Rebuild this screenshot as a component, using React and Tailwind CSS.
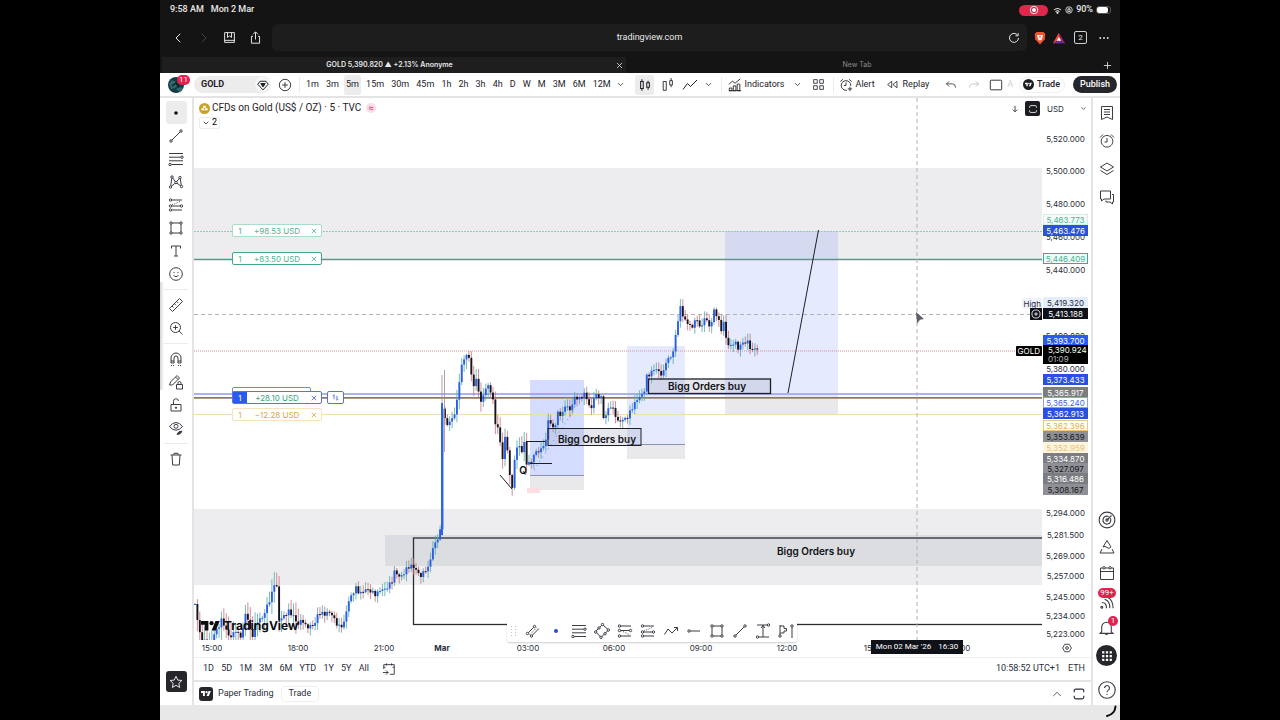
import { useState } from "react";
import { ChevronDown, ChevronUp, ChevronLeft, ChevronRight, X, Plus } from "lucide-react";

const intervals = ["1m", "3m", "5m", "15m", "30m", "45m", "1h", "2h", "3h", "4h", "D", "W", "M", "3M", "6M", "12M"];
const ranges = ["1D", "5D", "1M", "3M", "6M", "YTD", "1Y", "5Y", "All"];

// [x, y] of the close along the chart
const path = [
  [195, 604], [197, 616], [199, 632], [203, 640], [210, 646], [214, 634], [218, 628], [222, 619], [226, 630],
  [230, 638], [236, 630], [240, 638], [244, 626], [246, 609], [248, 620], [252, 638], [256, 622], [262, 618],
  [265, 612], [268, 603], [271, 598], [274, 583], [277, 588], [279, 620], [284, 616], [289, 611], [294, 617],
  [298, 625], [302, 619], [306, 627], [312, 626], [316, 622], [318, 613], [325, 614], [330, 612], [335, 620],
  [338, 627], [343, 625], [345, 621], [347, 606], [350, 598], [356, 588], [360, 594], [366, 589], [372, 592],
  [376, 595], [380, 590], [386, 589], [392, 581], [395, 570], [399, 577], [403, 575], [407, 568], [410, 566],
  [414, 567], [418, 573], [421, 576], [426, 569], [429, 568], [431, 555], [434, 545], [438, 538], [440, 538],
  [442, 403], [444, 418], [447, 424], [450, 422], [453, 417], [456, 410], [458, 391], [460, 375], [463, 360],
  [466, 355], [469, 358], [472, 378], [474, 389], [476, 376], [478, 390], [480, 402], [483, 397], [486, 388],
  [489, 383], [491, 397], [494, 398], [495, 426], [499, 426], [501, 455], [503, 460], [505, 436], [507, 449],
  [509, 463], [511, 489], [513, 490], [514, 462], [516, 450], [519, 445], [522, 452], [524, 441], [526, 462],
  [528, 465], [532, 460], [536, 451], [540, 452], [543, 445], [547, 440], [548, 418], [552, 428], [556, 424],
  [558, 412], [562, 416], [565, 405], [570, 410], [575, 397], [580, 399], [585, 393], [588, 403], [592, 410],
  [594, 396], [598, 396], [602, 398], [603, 418], [606, 415], [610, 405], [614, 411], [618, 422], [622, 420],
  [627, 418], [632, 408], [638, 398], [644, 393], [646, 377], [650, 374], [655, 368], [660, 373], [663, 376],
  [665, 362], [670, 358], [674, 350], [676, 332], [678, 320], [680, 307], [682, 311], [684, 320], [690, 325],
  [692, 331], [694, 318], [698, 323], [702, 327], [705, 315], [709, 327], [711, 326], [713, 310], [716, 313],
  [720, 325], [722, 333], [724, 320], [726, 338], [730, 348], [735, 340], [737, 350], [742, 343], [748, 342],
  [752, 352], [755, 347], [758, 351],
];

function priceAt(x) {
  const i = path.findIndex((p) => p[0] >= x);
  if (i <= 0) return path[0][1];
  const [x0, y0] = path[i - 1];
  const [x1, y1] = path[i];
  return y0 + ((y1 - y0) * (x - x0)) / (x1 - x0);
}

function wickSize(x) {
  if (x < 300) return 12;
  if (x > 455 && x < 530) return 9;
  return 6;
}

function buildCandles() {
  const list = [];
  let open = 604;
  for (let i = 0; i < 235; i++) {
    const x = 195 + i * 2.403;
    if (x > 440.5 && x < 441.8) continue;
    const close = priceAt(x) + Math.sin(i * 2.7) * 1.8;
    const up = Math.abs(Math.sin(i * 12.9)) * wickSize(x) + 1;
    const down = Math.abs(Math.sin(i * 7.3)) * wickSize(x) + 1;
    list.push({ x, open, close, high: Math.min(open, close) - up, low: Math.max(open, close) + down });
    open = close;
  }
  return list;
}

const candles = buildCandles();

const priceLabels = [
  { y: 139, text: "5,520.000" },
  { y: 171, text: "5,500.000" },
  { y: 204, text: "5,480.000" },
  { y: 237, text: "5,460.000" },
  { y: 220, text: "5,463.773", cls: "bg-[#f4fbf8] text-[#4fb391] border border-[#d3efe5]" },
  { y: 231, text: "5,463.476", cls: "bg-[#2a50e0] text-white" },
  { y: 259, text: "5,446.409", cls: "bg-[#f1faf7] text-[#4fb391] border border-[#41a98a]" },
  { y: 270, text: "5,440.000" },
  { y: 303, text: "5,419.320", cls: "bg-[#e3edfc] text-[#2a2e39]" },
  { y: 314, text: "5,413.188", cls: "bg-[#101219] text-white" },
  { y: 336, text: "5,400.000" },
  { y: 341, text: "5,393.700", cls: "bg-[#2a5af0] text-white" },
  { y: 369, text: "5,380.000" },
  { y: 380, text: "5,373.433", cls: "bg-[#2a50e0] text-white" },
  { y: 393, text: "5,365.917", cls: "bg-[#7b7d82] text-white" },
  { y: 403, text: "5,365.240", cls: "bg-white text-[#4762d8] border border-[#8ea0ea]" },
  { y: 414, text: "5,362.913", cls: "bg-[#2a50e0] text-white" },
  { y: 426, text: "5,362.396", cls: "bg-white text-[#e2b04c] border border-[#edc77f]" },
  { y: 437, text: "5,353.639", cls: "bg-[#8f9095] text-[#15171c]" },
  { y: 448, text: "5,352.959", cls: "bg-[#fff4dc] text-[#e8c27a]" },
  { y: 459, text: "5,334.870", cls: "bg-[#7b7d82] text-white" },
  { y: 469, text: "5,327.097", cls: "bg-[#8f9095] text-[#15171c]" },
  { y: 479, text: "5,316.486", cls: "bg-[#7b7d82] text-white" },
  { y: 490, text: "5,308.167", cls: "bg-[#8f9095] text-[#15171c]" },
  { y: 513, text: "5,294.000" },
  { y: 535, text: "5,281.500" },
  { y: 556, text: "5,269.000" },
  { y: 576, text: "5,257.000" },
  { y: 597, text: "5,245.000" },
  { y: 616, text: "5,234.000" },
  { y: 634, text: "5,223.000" },
];

const timeLabels = [
  [212, "15:00"], [298, "18:00"], [384, "21:00"], [442, "Mar"], [528, "03:00"],
  [614, "06:00"], [701, "09:00"], [787, "12:00"], [874, "15:00"], [960, "18:00"],
];

function Icon({ children, className = "size-4", width = 1 }) {
  return (
    <svg viewBox="0 0 16 16" fill="none" stroke="currentColor" strokeWidth={width} className={className} aria-hidden="true">
      {children}
    </svg>
  );
}

const Dot = ({ x, y, r = 1.2 }) => <circle cx={x} cy={y} r={r} fill="#fff" />;

const TrendLine = () => (
  <Icon>
    <path d="M3 13L13 3" />
    <Dot x={3} y={13} />
    <Dot x={13} y={3} />
  </Icon>
);

const Rectangle = () => (
  <Icon>
    <path d="M3 3h10v10H3z" />
    <Dot x={3} y={3} />
    <Dot x={13} y={3} />
    <Dot x={3} y={13} />
    <Dot x={13} y={13} />
  </Icon>
);

const FibLines = () => (
  <Icon>
    <path d="M1 2.500h14M1 6.200h14M1 9.800h14M1 13.500h14" />
    <Dot x={14} y={6.2} />
    <Dot x={2} y={13.5} />
  </Icon>
);

const LongPosition = () => (
  <Icon>
    <path d="M2 3h12M2 7.500h12M2 13h12" />
    <path d="M4 7.500L13 12" strokeDasharray="1 1.500" />
    <Dot x={2.5} y={3} />
    <Dot x={2.5} y={7.5} />
    <Dot x={13.5} y={7.5} />
    <Dot x={2.5} y={13} />
  </Icon>
);

const ShortPosition = () => (
  <Icon>
    <path d="M2 3h12M2 9h12M2 13h12" />
    <path d="M4 8L13 4" strokeDasharray="1 1.500" />
    <Dot x={2.5} y={3} />
    <Dot x={2.5} y={9} />
    <Dot x={13.5} y={9} />
    <Dot x={2.5} y={13} />
  </Icon>
);

const Frame = ({ className }) => (
  <Icon className={className} width={1.3}>
    <path d="M2.500 6V4.500Q2.500 2.500 4.500 2.500H11.500Q13.500 2.500 13.500 4.500V6M2.500 10V11.500Q2.500 13.500 4.500 13.500H11.500Q13.500 13.500 13.500 11.500V10" />
  </Icon>
);

const TvMark = ({ className }) => (
  <svg viewBox="0 0 36 28" fill="currentColor" className={className} aria-hidden="true">
    <path d="M14 22H7V11H0V4h14v18zM28 22h-8l7.500-18h8L28 22z" />
    <circle cx="20" cy="8" r="4" />
  </svg>
);

const drawTools = [
  [
    ["Dot cursor", <Icon><circle cx="8" cy="8" r="1.800" fill="#111" stroke="none" /></Icon>],
    ["Trend line", <TrendLine />],
    ["Fib retracement", <FibLines />],
    ["Patterns", (
      <Icon>
        <path d="M2.500 13L4 3L8 8.500L12 3.500L13.500 12.500L8 8.500z" />
        <Dot x={2.5} y={13} />
        <Dot x={4} y={3} />
        <Dot x={8} y={8.5} />
        <Dot x={12} y={3.5} />
        <Dot x={13.5} y={12.5} />
      </Icon>
    )],
    ["Forecasting", <ShortPosition />],
    ["Shapes", <Rectangle />],
    ["Text", <Icon><path d="M3.500 5.500V3h9v2.500M8 3v10M6 13h4" /></Icon>],
    ["Emoji", (
      <Icon>
        <circle cx="8" cy="8" r="6.300" />
        <path d="M5.500 9.500Q8 12 10.500 9.500M6 6v1M10 6v1" />
      </Icon>
    )],
  ],
  [
    ["Measure", <Icon><path d="M1.500 11.500L11.500 1.500L14.500 4.500L4.500 14.500zM4 9l1.500 1.500M6.300 6.700l1.500 1.500M8.600 4.400l1.500 1.500" /></Icon>],
    ["Zoom in", (
      <Icon>
        <circle cx="7.500" cy="7.500" r="5" />
        <path d="M11 11l3.500 3.500M5.200 7.500h4.600M7.500 5.200v4.600" />
      </Icon>
    )],
  ],
  [
    ["Magnet", <Icon><path d="M3 12V7a5 5 0 0 1 10 0v5h-3V7a2 2 0 0 0-4 0v5zM3 10h3M10 10h3M3.500 14v1M5.500 14v1M10.500 14v1M12.500 14v1" /></Icon>],
    ["Stay in drawing mode", <Icon><path d="M1.500 11L2.500 8L9 1.500L11.500 4L4.500 11zM7.500 3l2.500 2.500M8.500 10.500h6V15h-6zM10 10.500V9a1.500 1.500 0 0 1 3 0V10.500" /></Icon>],
    ["Lock drawings", <Icon><path d="M3 7.500h10v6.500H3zM5.500 7.500V4.500a2.500 2.500 0 0 1 5-.5" /><circle cx="8" cy="10.700" r=".7" fill="currentColor" /></Icon>],
    ["Hide drawings", (
      <Icon>
        <path d="M1.500 6.500Q8-1.500 14.500 6.500Q8 14 1.500 6.500z" />
        <circle cx="8" cy="6.300" r="2" />
        <path d="M9 14.500Q10 11 14 11Q13 14.500 9 14.500z" fill="currentColor" />
      </Icon>
    )],
  ],
  [
    ["Remove objects", <Icon><path d="M2.500 4h11M6 4V2.300h4V4M4 4l.7 10h6.600L12 4" /></Icon>],
  ],
];

const favTools = [
  ["Parallel channel", (
    <Icon>
      <path d="M2.500 10.500L9.500 3.500M6.500 13L14 5.500" />
      <path d="M4.500 12L12 4.500" strokeDasharray="1 1.500" />
      <Dot x={2.5} y={10.5} />
      <Dot x={9.5} y={3.5} />
      <Dot x={6.5} y={13} />
    </Icon>
  )],
  ["Dot", <Icon><circle cx="8" cy="8" r="2" fill="#2b4bdc" stroke="none" /></Icon>],
  ["Fib", <FibLines />],
  ["Rotated rectangle", (
    <Icon>
      <path d="M8.500 1.500L14.500 7L7 14.500L1.500 8.500z" />
      <Dot x={8.5} y={1.5} />
      <Dot x={14.3} y={7} />
      <Dot x={7} y={14.3} />
      <Dot x={1.7} y={9} />
      <Dot x={5} y={5} />
      <Dot x={11} y={10.7} />
    </Icon>
  )],
  ["Long position", <LongPosition />],
  ["Short position", <ShortPosition />],
  ["Path", <Icon><path d="M1.500 11.500L5 6L9 10L14.500 4.500M11 4.500h3.500V8" /></Icon>],
  ["Horizontal ray", <Icon><path d="M2.500 8H14" /><Dot x={3} y={8} /></Icon>],
  ["Rectangle", <Rectangle />],
  ["Line", <TrendLine />],
  ["Price range", <Icon><path d="M2 2h12M2 14h12M8 2v12M6 5l2-2.500L10 5" /><Dot x={13.5} y={2} /><Dot x={2.5} y={14} /></Icon>],
  ["Anchored volume profile", <Icon><path d="M2 2v12M2 3h4v2.500h2.500v2.500H6v2H2M14 3v12" /><Dot x={2} y={13} /><Dot x={14} y={3} /></Icon>],
];

const Divider = () => <span className="h-4 w-px shrink-0 bg-[#ebebeb]" />;

function Browser() {
  return (
    <header className="bg-[#141414] text-[#e8e8e8]">
      <div className="flex h-5 items-center pl-[10px] pr-[9px] text-[9px] font-medium">
        <span>9:58 AM</span>
        <span className="ml-[7px]">Mon 2 Mar</span>
        <span className="ml-auto flex h-[11px] w-[29px] items-center justify-center rounded-full bg-[#e0264b]">
          <Icon className="size-[10px]" width={1.6}>
            <circle cx="8" cy="8" r="6" />
            <circle cx="8" cy="8" r="2.600" fill="#fff" />
          </Icon>
        </span>
        <Icon className="ml-[5px] size-[9px]" width={2}>
          <path d="M2 7Q8 2 14 7M4.500 10Q8 7 11.500 10" />
          <circle cx="8" cy="12" r="1" fill="currentColor" />
        </Icon>
        <Icon className="ml-[3px] size-[8px]" width={1.6}>
          <circle cx="8" cy="8" r="6.500" />
          <path d="M5.500 7.500h5v3.500h-5zM6.500 7.500V5.500a1.500 1.500 0 0 1 3 0v2" />
        </Icon>
        <span className="ml-[3px]">90%</span>
        <span className="ml-[3px] flex h-2 w-[15px] rounded-[3px] border border-[#555] bg-[#141414]">
          <span className="w-[11px] rounded-[2px] bg-white" />
        </span>
      </div>

      {/* address bar */}
      <div className="flex h-[35px] items-center">
        <button aria-label="Back" className="flex w-[26px] justify-end"><ChevronLeft size={16} strokeWidth={1.5} /></button>
        <button aria-label="Forward" className="flex w-[26px] justify-end text-[#444]"><ChevronRight size={16} strokeWidth={1.5} /></button>
        <button aria-label="Bookmarks" className="ml-[11px]">
          <Icon className="size-[13px]" width={1.2}><path d="M2 2h12v12H2zM2 11.500h12M5.500 2v6L8 6l2.500 2V2" /></Icon>
        </button>
        <button aria-label="Share" className="ml-[13px]">
          <Icon className="size-[13px]" width={1.2}><path d="M5 6.500H3V15h10V6.500h-2M8 10.500V1.500M5 4l3-3 3 3" /></Icon>
        </button>
        <div className="ml-[10px] flex h-[27px] flex-1 items-center rounded-md bg-[#1d1d1d] pr-[7px]">
          <input aria-label="Address" className="min-w-0 flex-1 bg-transparent pl-[19px] text-center text-[9px] outline-none" defaultValue="tradingview.com" />
          <button aria-label="Reload">
            <Icon className="size-[12px]" width={1.3}><path d="M13 4.500A6 6 0 1 0 14 8M13.500 1.500V5H10" /></Icon>
          </button>
        </div>
        <button aria-label="Shields" className="ml-[6px]">
          <svg viewBox="0 0 16 16" className="size-[14px]">
            <path d="M4 1h8l2 2.500-.5 6L8 15.500 2.500 9.500 2 3.500z" fill="#f2542d" />
            <path d="M4.500 4.500h7l-1.500 5L8 11 6 9.500z" fill="#fff" />
            <path d="M6.800 6h2.400L8 9z" fill="#f2542d" />
          </svg>
        </button>
        <button aria-label="Rewards" className="ml-[6px]">
          <svg viewBox="0 0 16 16" className="size-[12px]">
            <path d="M8 1L16 15H0z" fill="#9e1f63" />
            <path d="M8 1L0 15l8-5z" fill="#ff4724" />
            <path d="M0 15h16L8 10z" fill="#662d91" />
            <path d="M8 6.500l3 5H5z" fill="#fff" />
          </svg>
        </button>
        <button aria-label="Tabs" className="ml-[9px] flex size-[13px] items-center justify-center rounded-[2px] border border-[#cfcfcf] text-[8px]">2</button>
        <button aria-label="Menu" className="ml-[12px] mr-[11px]">
          <Icon className="size-[10px]">
            <g fill="currentColor" stroke="none"><circle cx="2" cy="8" r="1.500" /><circle cx="8" cy="8" r="1.500" /><circle cx="14" cy="8" r="1.500" /></g>
          </Icon>
        </button>
      </div>

      {/* tabs */}
      <div className="flex h-[18px] items-center pt-0.5 font-['Inter',sans-serif] text-[7px]">
        <div className="ml-0.5 flex h-4 w-[464px] items-center bg-[#1e1e1e] font-semibold">
          <button className="flex-1 pl-0.5 text-center">GOLD 5,390.820 ▲ +2.13% Anonyme</button>
          <button aria-label="Close tab" className="pr-0.5"><X size={9} strokeWidth={2} /></button>
        </div>
        <button className="flex-1 pr-3.5 text-center text-[#8c8c8c]">New Tab</button>
        <button aria-label="New tab" className="pr-[7px]"><Plus size={11} strokeWidth={1.8} /></button>
      </div>
    </header>
  );
}

function Toolbar() {
  const [active, setActive] = useState("5m");
  return (
    <div className="flex h-[25px] shrink-0 items-center border-b-2 border-[#e4e4e5] bg-white text-[9px] text-[#1e2128]">
      <button aria-label="Account" className="relative ml-2 size-4 rounded-full bg-[#173b42]">
        <svg viewBox="0 0 16 16" className="size-4 rounded-full" aria-hidden="true">
          <path d="M1 7l3-4 4 2 2 3-3 3-4 1zM8 12l4-2 3 1-3 4z" fill="#2c6a70" />
          <path d="M4 9l4-3 3 4" stroke="#0c1c22" strokeWidth="1.500" fill="none" />
        </svg>
        <span className="absolute -top-0.5 left-[9px] flex h-[10px] w-[13px] items-center justify-center rounded-full bg-[#e2224e] text-[8px] text-white">11</span>
      </button>
      <button className="ml-[10px] flex h-[17px] w-[77px] shrink-0 items-center justify-between rounded-full bg-[#ececec] pl-[7px] pr-px font-bold">
        GOLD
        <span className="flex size-[15px] items-center justify-center rounded-full bg-[#f7f7f7]">
          <Icon className="size-3" width={1.3}>
            <path d="M4 3h8l3 4-7 7.500L1 7z" />
            <path d="M5 6h6L8 10.500z" fill="currentColor" />
          </Icon>
        </span>
      </button>
      <button aria-label="Compare" className="ml-[7px] mr-[7px]">
        <Icon className="size-[14px]"><circle cx="8" cy="8" r="6.500" /><path d="M8 4.800v6.400M4.800 8h6.400" /></Icon>
      </button>
      <Divider />
      <div className="ml-1 flex w-[321px] shrink-0 items-center justify-between">
        {intervals.map((t) => (
          <button
            key={t}
            onClick={() => setActive(t)}
            className={`h-5 rounded-[3px] px-0.5 ${t === active ? "bg-[#ececec]" : ""}`}
          >
            {t}
          </button>
        ))}
        <button aria-label="More intervals"><ChevronDown size={9} strokeWidth={2} /></button>
      </div>
      <button aria-label="Candles" className="ml-[10px] flex size-5 items-center justify-center rounded-[3px] bg-[#ececec]">
        <Icon className="size-[14px]" width={1.2}><path d="M3 4h3v8H3zM4.500 1.500V4M4.500 12v2.500M10 5.500h3v5h-3zM11.500 3v2.500M11.500 10.500v3" /></Icon>
      </button>
      <button aria-label="Hollow candles" className="ml-0.5 flex w-[23px] justify-center">
        <Icon className="size-[14px]"><path d="M2.500 4h3.500v10H2.500zM10 3h3v5h-3zM11.500 0v3M11.500 8v2.500" /></Icon>
      </button>
      <button aria-label="Line" className="flex w-[23px] justify-center">
        <Icon><path d="M1 12.500L5.500 6.500L8.500 9.500L15 3" /></Icon>
      </button>
      <button aria-label="Chart types" className="mr-1 flex w-4 justify-center"><ChevronDown size={9} strokeWidth={2} /></button>
      <Divider />
      <button className="ml-[6px] flex items-center gap-[3px]">
        <Icon className="size-[14px]"><path d="M1.500 14.500v-3h3v3zM6 14.500V9h3v5.500zM10.500 14.500V7h3v7.500zM1 7.500l4-4 3 2.500 6-5M1 14.500h14" /></Icon>
        Indicators
      </button>
      <button aria-label="Indicator templates" className="mx-2"><ChevronDown size={9} strokeWidth={2} /></button>
      <button aria-label="Layouts" className="ml-0.5 mr-2">
        <Icon className="size-[13px]"><path d="M2 2h4.500v4.500H2zM9.500 2H14v4.500H9.500zM2 9.500h4.500V14H2zM9.500 9.500H14V14H9.500z" strokeLinejoin="round" /></Icon>
      </button>
      <Divider />
      <button className="ml-[5px] flex items-center gap-[3px]">
        <Icon className="size-[14px]"><path d="M9 14A5.500 5.500 0 1 1 13.500 9M8 5v3.500H5.500M1.500 4L4.500 1.500M11.500 1.500L14.500 4M12.500 10v5M10 12.500h5" /></Icon>
        Alert
      </button>
      <button className="ml-[11px] flex items-center gap-1">
        <Icon className="size-[13px]"><path d="M7 4v8L2 8zM13.500 4v8L8.500 8z" /></Icon>
        Replay
      </button>
      <span className="ml-[11px]"><Divider /></span>
      <button aria-label="Undo" className="flex w-[23px] justify-center">
        <Icon className="size-3"><path d="M5.500 3L2 6.500L5.500 10M2 6.500h8q4 0 4 5" /></Icon>
      </button>
      <button aria-label="Redo" className="flex w-[23px] justify-center text-[#b5b5b8]">
        <Icon className="size-3"><path d="M10.500 3L14 6.500L10.500 10M14 6.500H6q-4 0-4 5" /></Icon>
      </button>
      <button aria-label="Layout setup" className="flex w-[23px] justify-center">
        <Icon className="size-[14px]"><rect x="1.500" y="2.500" width="13" height="11" rx="1" /></Icon>
      </button>
      <div className="ml-auto flex shrink-0 items-center pr-[3px]">
        <span className="mr-1.5 text-[#d0d0d2]">A</span>
        <button className="flex h-4 items-center gap-[3px] rounded-full border border-[#f0f0f0] pl-[3px] pr-1 font-medium">
          <span className="flex size-[11px] items-center justify-center rounded-full bg-[#1c1d21] text-white">
            <TvMark className="w-[7px]" />
          </span>
          Trade
        </button>
        <button className="ml-2 h-[17px] rounded-full bg-[#26272b] px-[7px] font-medium text-white">Publish</button>
      </div>
    </div>
  );
}

function LeftTools() {
  return (
    <aside className="relative flex w-8 shrink-0 flex-col items-center bg-white pt-[3px] text-[#3a3d45]">
      {drawTools.map((group, i) => (
        <div key={i} className="flex flex-col items-center">
          {i > 0 && <span className="mb-[3px] mt-1 h-px w-6 bg-[#ebebeb]" />}
          {group.map(([name, icon], j) => (
            <button
              key={name}
              aria-label={name}
              className={`flex h-[23px] w-[21px] items-center justify-center rounded-[3px] ${i === 0 && j === 0 ? "bg-[#ececec]" : ""}`}
            >
              {icon}
            </button>
          ))}
        </div>
      ))}
      <button aria-label="Favorites" className="mb-[13px] mt-auto flex size-[21px] items-center justify-center rounded-[3px] bg-[#26272b] text-white">
        <Icon className="size-[14px]"><path d="M8 1.500l2 4.300 4.700.5-3.500 3.200 1 4.700L8 11.800l-4.200 2.400 1-4.700L1.300 6.300 6 5.800z" /></Icon>
      </button>
      {/* shade of the panel tucked behind the edge */}
      <span className="absolute left-0 top-[184px] h-[108px] w-1 bg-linear-to-r from-[#d4d4d4] to-transparent" />
    </aside>
  );
}

function RightTools() {
  return (
    <aside className="flex w-[27px] shrink-0 flex-col items-center bg-white pt-px text-[#3a3d45]">
      {[
        ["Watchlist", "M2.500 1.500h11v13L8 12l-5.500 2.500zM5 4.500h6M5 7h6M5 9.500h6"],
        ["Alerts", "M8 2.500a5.800 5.800 0 1 0 .01 0zM8 5v4H5.500M1 4.500L4 1.500M12 1.500L15 4.500"],
        ["Object tree", "M8 2l6.500 4L8 10L1.500 6zM1.500 9.500L8 13.500l6.500-4"],
        ["Chats", "M1.500 2h10v8H5L2.500 12v-2h-1zM13 5.500h1.500V13h-1v2L11 13H7v-1.500"],
      ].map(([name, d]) => (
        <button key={name} aria-label={name} className="flex h-7 items-center"><Icon><path d={d} /></Icon></button>
      ))}
      <button aria-label="Screeners" className="mt-auto flex h-[26px] items-center">
        <Icon className="size-[18px]"><circle cx="8" cy="8" r="7" /><path d="M11 6.500A3.500 3.500 0 1 1 9.500 5M8 8l4-4" /><circle cx="8" cy="8" r="1" /></Icon>
      </button>
      <button aria-label="Pine" className="flex h-[27px] items-center">
        <Icon><path d="M8 1.500L4 8Q6 6.500 8 8.500T12 8zM3 10l-2 4h14l-2-4" /></Icon>
      </button>
      <button aria-label="Calendar" className="flex h-[26px] items-center">
        <Icon><path d="M1.500 3h13v11.500h-13zM1.500 6.500h13" /><Dot x={5} y={2.8} /><Dot x={11} y={2.8} /></Icon>
      </button>
      <button aria-label="News" className="relative flex h-[27px] items-end pb-[3px]">
        <Icon className="size-[15px]" width={1.2}><circle cx="3" cy="13" r="1" /><path d="M3 8q5 0 5 6M6 4.500q6 2 5.500 9.500M10 3q5 3 5 11" /></Icon>
        <span className="absolute -left-px top-[2px] flex h-[10px] w-[18px] items-center justify-center rounded-full bg-[#e2224e] text-[8px] text-white">99+</span>
      </button>
      <button aria-label="Notifications" className="relative flex h-7 items-center">
        <Icon className="size-[17px]"><path d="M3.500 12V7.500a4.500 4.500 0 0 1 9 0V12l1.500 1.500H2zM6.500 13.500q1.500 2 3 0" /></Icon>
        <span className="absolute left-[10px] top-[3px] flex size-[10px] items-center justify-center rounded-full bg-[#e2224e] text-[8px] text-white">1</span>
      </button>
      <button aria-label="Apps" className="mt-1 flex size-[21px] items-center justify-center rounded-full bg-[#26272b] text-white">
        <Icon className="size-3" width={3}><path d="M1.500 3h13M1.500 8h13M1.500 13h13" strokeDasharray="3 2" /></Icon>
      </button>
      <button aria-label="Help" className="mb-[6px] mt-[15px]">
        <Icon className="size-[18px]"><circle cx="8" cy="8" r="7.300" /><path d="M5.800 6.200a2.200 2.200 0 1 1 3.400 1.900Q8 8.800 8 10M8 11.500v1" /></Icon>
      </button>
    </aside>
  );
}

function Drawing() {
  return (
    <svg className="absolute inset-0 size-full" fontFamily="Inter, sans-serif">
      <g transform="translate(-194 -98)">
        {/* supply and demand zones */}
        <rect x="194" y="168" width="2000" height="92" fill="#ededef" />
        <rect x="194" y="509" width="2000" height="76" fill="#ededef" />
        <rect x="385" y="535" width="2000" height="31" fill="#dcdde0" />

        {/* positions */}
        <g fill="#2650ff">
          <rect x="725" y="231" width="113" height="162" fillOpacity=".12" />
          <rect x="530" y="380" width="54" height="96" fillOpacity=".2" />
          <rect x="627" y="346" width="58" height="99" fillOpacity=".12" />
        </g>
        <g fill="#e9e9eb">
          <rect x="725" y="394" width="113" height="20" />
          <rect x="530" y="476" width="54" height="14" />
          <rect x="627" y="445" width="58" height="14" />
        </g>
        <path d="M530 475.500h54M627 444.500h58" stroke="#8c93b5" />
        <rect x="527" y="488" width="13" height="5" fill="#fbdde2" />

        {/* price lines */}
        <path d="M194 231.500h2000" stroke="#8fcdbb" strokeDasharray="2 1" />
        <path d="M194 259.500h2000" stroke="#3fa68a" strokeWidth="1.300" />
        <path d="M194 314.500h2000" stroke="#b0b2b7" strokeDasharray="4 3" />
        <path d="M194 351h2000" stroke="#d98d95" strokeDasharray="1 1" />
        <path d="M194 394h2000" stroke="#8f9de0" strokeWidth="1.300" />
        <path d="M194 397.500h2000" stroke="#7c7690" />
        <path d="M194 398.500h2000" stroke="#b59a8a" />
        <path d="M194 414.500h2000" stroke="#f0dcae" />

        <rect x="413.500" y="538" width="2000" height="86.500" fill="none" stroke="#2b2d33" strokeWidth="1.300" />

        {candles.map((c) => {
          const up = c.close <= c.open;
          return (
            <g key={c.x}>
              <path d={`M${c.x} ${c.high}V${c.low}`} stroke={up ? "#52aaa8" : "#c9707c"} strokeWidth=".8" />
              <rect
                x={c.x - 0.95}
                y={Math.min(c.open, c.close)}
                width="1.900"
                height={Math.max(1, Math.abs(c.open - c.close))}
                fill={up ? "#2b5de8" : "#15151c"}
              />
            </g>
          );
        })}
        <path d="M442 375v28M444.500 370v82" stroke="#a4879a" strokeWidth=".8" />
        <path d="M442 403v132" stroke="#2f66e0" strokeWidth="2" />

        {/* hand-drawn lines */}
        <path d="M818.500 230L788 393M526 441.500h19M530 463.500h22M500 475l12 14" stroke="#1e2027" fill="none" />
        <path d="M534 470L574 410" stroke="#5f86ee" strokeDasharray="1 4" />
        <rect x="548" y="428.500" width="93" height="17" fill="#9a9fb5" fillOpacity=".25" stroke="#1e2027" />
        <rect x="648.500" y="379" width="122" height="14.500" fill="#9a9fb5" fillOpacity=".25" stroke="#1e2027" strokeWidth="1.300" />
        <g fontSize="10" fontWeight="600" textAnchor="middle" fill="#0f1014">
          <text x="597" y="443">Bigg Orders buy</text>
          <text x="707" y="390">Bigg Orders buy</text>
          <text x="816" y="555">Bigg Orders buy</text>
          <text x="523" y="474">Q</text>
        </g>

        <path d="M917 98v600" stroke="#b0b2b7" strokeDasharray="4 3" />
        <path d="M916 312l8 7-4 .7-3 3.800z" fill="#5d5f66" />
      </g>
    </svg>
  );
}

function OrderTag({ top, qty = "1", value, frame, color, qtyClass = "" }) {
  return (
    <div className={`absolute left-[38px] flex h-[13px] w-[90px] items-center rounded-[2px] border bg-white font-['Inter',sans-serif] text-[8px] ${frame} ${color}`} style={{ top }}>
      <span className={`flex h-full w-[14px] items-center justify-center ${qtyClass}`}>{qty}</span>
      <span className="flex-1 text-center">{value}</span>
      <button aria-label="Close" className="px-[3px]"><X size={8} strokeWidth={2.4} /></button>
    </div>
  );
}

function Chart() {
  return (
    <div className="relative flex min-h-0 flex-1 flex-col bg-white">
      <div className="flex min-h-0 flex-1">
        <div className="relative min-w-0 flex-1 overflow-hidden">
          <Drawing />

          {/* legend */}
          <div className="relative flex items-center pl-[5px] pt-1 text-[10px] leading-[12px] text-[#1e2128]">
            <span className="flex size-[11px] items-center justify-center rounded-full bg-[#c9a227]">
              <svg viewBox="0 0 10 8" className="w-[7px] fill-white"><path d="M3.500 1h3L7.500 4h-5zM1 4.500h3l1 3H0zM6 4.500h3l1 3H5z" /></svg>
            </span>
            <span className="ml-0.5">CFDs on Gold (US$ / OZ) · 5 · TVC</span>
            <span className="ml-[5px] flex size-[10px] items-center justify-center rounded-full bg-[#fbdbe5] text-[9px] text-[#d22e62]">≈</span>
          </div>
          <button className="relative ml-[5px] mt-[3px] flex h-3 items-center gap-0.5 rounded-[2px] border border-[#ececec] px-0.5 text-[9px]">
            <ChevronDown size={8} strokeWidth={2} />2
          </button>

          {/* orders */}
          <OrderTag top={126} value="+98.53 USD" frame="border-[#a8dccb]" color="text-[#4fb391]" />
          <OrderTag top={154} value="+83.50 USD" frame="border-[#3fa68a]" color="text-[#4fb391]" />
          <span className="absolute left-[38px] top-[289px] h-3 w-[79px] rounded-[2px] border border-[#6f85e4] bg-white" />
          <OrderTag top={310} value="−12.28 USD" frame="border-[#f6e3bd]" color="text-[#dfa53d]" />
          <OrderTag top={293} value={<span className="text-[#3aa37f]">+28.10 USD</span>} frame="border-[#5a72df]" color="text-[#3a56d6]" qtyClass="bg-[#2a5af0] text-white" />
          <button aria-label="Reverse" className="absolute left-[133px] top-[293px] flex h-[13px] w-[17px] items-center justify-center rounded-[2px] border border-[#5a72df] bg-white text-[#3a56d6]">
            <Icon className="size-[9px]" width={1.4}><path d="M5.500 11V3L3 5.500M10.500 5v8l2.500-2.500" /></Icon>
          </button>

          {/* watermark */}
          <div className="absolute bottom-1.5 left-[7px] flex items-center gap-1 font-['Inter',sans-serif] text-[12px] font-bold leading-4 text-[#0c0d10]">
            <TvMark className="w-[19px]" />
            TradingView
          </div>
        </div>

        {/* price scale */}
        <div className="relative w-[49px] shrink-0 font-['Inter',sans-serif] text-[8px] text-[#2a2e39]">
          {priceLabels.map((p) => (
            <div
              key={p.text}
              className={`absolute left-px flex h-[11px] w-[45px] items-center justify-center ${p.cls || ""}`}
              style={{ top: p.y - 104 }}
            >
              {p.text}
            </div>
          ))}
          <div className="absolute left-px top-[247px] flex h-[19px] w-[45px] flex-col justify-center bg-black pl-[5px] leading-[9px] text-white">
            <span>5,390.924</span>
            <span className="text-[#b8b8b8]">01:09</span>
          </div>
          <span className="absolute right-[49px] top-[200px] flex h-[11px] items-center bg-[#eef3fd] px-px">High</span>
          <button aria-label="Add alert" className="absolute right-[49px] top-[210px] flex h-3 w-3 items-center justify-center bg-[#101219] text-white">
            <Icon className="size-[10px]" width={1.3}><circle cx="8" cy="8" r="6.500" /><path d="M8 5v6M5 8h6" /></Icon>
          </button>
          <span className="absolute right-[49px] top-[248px] flex h-[10px] items-center rounded-[1px] bg-black px-0.5 text-white">GOLD</span>
          <div className="absolute right-0.5 top-[3px] flex items-center gap-[5px]">
            <button aria-label="Scroll down"><Icon className="size-[10px]" width={1.4}><path d="M8 3v9.500M4.500 9L8 12.500 11.500 9" /></Icon></button>
            <button aria-label="Fit" className="flex size-[15px] items-center justify-center rounded-[2px] bg-[#1c1d21] text-white"><Frame className="size-[10px]" /></button>
            <div className="relative ml-px flex items-center">
              <select aria-label="Currency" className="h-[14px] w-[43px] appearance-none bg-transparent pl-px font-['Inter',sans-serif] text-[8px] outline-none">
                <option>USD</option>
              </select>
              <ChevronDown size={7} strokeWidth={2.4} className="pointer-events-none absolute right-0.5" />
            </div>
          </div>
        </div>
      </div>

      {/* time scale */}
      <div className="relative h-[17px] shrink-0 overflow-hidden font-['Inter',sans-serif] text-[8px] text-[#2a2e39]">
        {timeLabels.map(([x, text]) => (
          <span key={x} className={`absolute top-0.5 -translate-x-1/2 leading-3 ${text === "Mar" ? "font-bold" : ""}`} style={{ left: x - 194 }}>
            {text}
          </span>
        ))}
        <span className="absolute left-[677px] top-0 flex h-[14px] w-[92px] items-center justify-center gap-[7px] bg-[#101219] font-['Roboto',sans-serif] text-white">
          <span>Mon 02 Mar '26</span>
          <span>16:30</span>
        </span>
        <button aria-label="Scale settings" className="absolute right-[19px] top-[3px]">
          <Icon className="size-[10px]" width={1.4}><path d="M4.500 2h7L15 8l-3.500 6h-7L1 8z" /><circle cx="8" cy="8" r="2.200" /></Icon>
        </button>
      </div>

      {/* favourite drawings */}
      <div className="absolute bottom-[15px] left-[313px] flex h-[22px] items-center rounded-[3px] bg-white text-[#3a3d45] shadow-[0_1px_2px_rgba(0,0,0,0.2)]">
        <svg viewBox="0 0 6 10" className="mx-1 h-[10px] w-[6px] fill-[#c3c3c6]" aria-hidden="true">
          <path d="M0 0h1v1H0zM4 0h1v1H4zM0 3h1v1H0zM4 3h1v1H4zM0 6h1v1H0zM4 6h1v1H4zM0 9h1v1H0zM4 9h1v1H4z" />
        </svg>
        {favTools.map(([name, icon]) => (
          <button key={name} aria-label={name} className="flex w-[23px] justify-center">{icon}</button>
        ))}
      </div>
    </div>
  );
}

export default function App() {
  return (
    <div className="flex h-screen flex-col bg-black px-[12.5%] font-['Roboto',sans-serif]">
      <Browser />
      <Toolbar />
      <main className="flex min-h-0 flex-1">
        <LeftTools />
        <section className="flex min-w-0 flex-1 flex-col border-x-2 border-[#e4e4e5]">
          <Chart />
          <div className="flex h-[23px] shrink-0 items-center border-t border-[#f0f0f1] bg-white pl-[9px] pr-[6px] text-[9px] text-[#2a2e39]">
            <div className="flex w-[166px] justify-between">
              {ranges.map((r) => (
                <button key={r}>{r}</button>
              ))}
            </div>
            <span className="ml-2"><Divider /></span>
            <button aria-label="Go to date" className="ml-[5px]">
              <Icon className="size-[14px]"><path d="M2 8V3h12v11H9M2 6h2M12 6h2M5 1.500V4M11 1.500V4M1 12h6M4.500 9.500L7 12l-2.500 2.500" /></Icon>
            </button>
            <button className="ml-auto">10:58:52 UTC+1</button>
            <button className="ml-2">ETH</button>
          </div>
          <div className="flex h-[25px] shrink-0 items-center border-t-2 border-[#e4e4e5] bg-white pl-[5px] pr-[5px] text-[9px] text-[#2a2e39]">
            <span className="flex size-[14px] items-center justify-center rounded-[3px] bg-[#26272b] text-white"><TvMark className="w-[10px]" /></span>
            <button className="ml-[5px]">Paper Trading</button>
            <button className="ml-[7px] h-4 rounded-[4px] border border-[#f0f0f1] px-[7px]">Trade</button>
            <button aria-label="Expand panel" className="ml-auto"><ChevronUp size={14} strokeWidth={1.3} /></button>
            <button aria-label="Maximize panel" className="ml-2"><Frame className="size-[14px]" /></button>
          </div>
        </section>
        <RightTools />
      </main>
      <footer className="flex h-[15px] shrink-0 justify-end bg-[#e8e8e8] pr-[3px]">
        <svg viewBox="0 0 12 13" className="h-[13px] w-3" fill="none" stroke="#0c0c0c" strokeWidth="2" strokeLinecap="round" aria-hidden="true">
          <path d="M10.500 1.500Q10 9 2 11" />
        </svg>
      </footer>
    </div>
  );
}
